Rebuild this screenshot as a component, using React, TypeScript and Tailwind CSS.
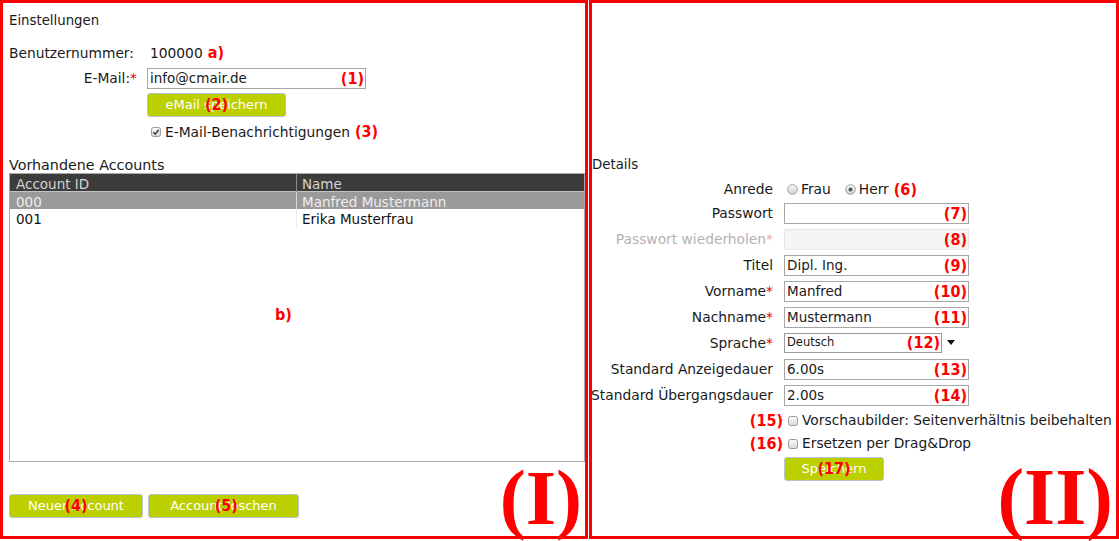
import React from "react";

const ann =
  "font-['DejaVu_Sans_Condensed','DejaVu_Sans',sans-serif] font-bold text-[16px] leading-none text-[#ff0000] whitespace-nowrap";

function Check({ checked }: { checked?: boolean }) {
  return (
    <svg width="10" height="10" viewBox="0 0 10 10" className="shrink-0">
      <defs>
        <linearGradient id="cbg" x1="0" y1="0" x2="0" y2="1">
          <stop offset="0" stopColor="#fdfdfd" />
          <stop offset="1" stopColor="#d6d6d6" />
        </linearGradient>
      </defs>
      <rect x="0.5" y="0.5" width="9" height="9" rx="2" fill="url(#cbg)" stroke="#9a9a9a" />
      {checked && <path d="M2.3 5.2 L4.2 7.1 L7.8 2.8" fill="none" stroke="#444" strokeWidth="1.6" />}
    </svg>
  );
}

function Radio({ checked }: { checked?: boolean }) {
  return (
    <svg width="11" height="11" viewBox="0 0 11 11" className="shrink-0">
      <defs>
        <linearGradient id="rbg" x1="0" y1="0" x2="0" y2="1">
          <stop offset="0" stopColor="#fbfbfb" />
          <stop offset="1" stopColor="#cfcfcf" />
        </linearGradient>
      </defs>
      <circle cx="5.5" cy="5.5" r="4.8" fill="url(#rbg)" stroke="#9c9c9c" />
      {checked && <circle cx="5.5" cy="5.5" r="2" fill="#555" />}
    </svg>
  );
}

function Field({ value, note, disabled }: { value?: string; note: string; disabled?: boolean }) {
  return (
    <div
      className={`relative flex h-[21px] w-[185px] items-center pl-[2px] text-[13.5px] ${
        disabled ? "border border-[#e6e6e6] bg-[#f5f5f3]" : "border border-[#a6a6a6] bg-white"
      }`}
    >
      {value}
      <span className={`absolute right-[1px] top-1/2 -translate-y-1/2 ${ann}`}>{note}</span>
    </div>
  );
}

function Label({ text, req, dim, h = "h-[21px]" }: { text: string; req?: boolean; dim?: boolean; h?: string }) {
  return (
    <div className={`flex ${h} items-center justify-end whitespace-nowrap ${dim ? "text-[#b3b3b3]" : ""}`}>
      {text}
      {req && <span className={dim ? "text-[#f5a3a3]" : "text-[#e60000]"}>*</span>}
    </div>
  );
}

function Button({ label, note, w, shift = 0 }: { label: string; note: string; w: string; shift?: number }) {
  return (
    <div
      className={`relative flex h-[24px] ${w} items-center justify-center rounded-[3px] border border-[#b7c3cf] bg-[#bccf00] text-[13px] text-white`}
    >
      {label}
      <span
        className={`absolute top-1/2 left-1/2 -translate-y-1/2 ${shift ? "-translate-x-[38%]" : "-translate-x-1/2"} ${ann}`}
      >
        {note}
      </span>
    </div>
  );
}

export default function App() {
  return (
    <div className="flex h-[541px] w-[1119px] gap-[1px] bg-white font-['DejaVu_Sans',sans-serif] text-[13.8px] text-[#1a1a1a]">
      {/* (I) Einstellungen */}
      <div className="relative flex h-[539px] w-[588px] flex-col border-[3px] border-[#ff0000] pl-[6px]">
        <div className="mt-[10px] h-[16px] text-[13.3px] leading-[16px]">Einstellungen</div>

        <div className="mt-[14px] flex h-[20px] items-center">
          <div className="w-[128px]">Benutzernummer:</div>
          <div className="ml-[13px] flex items-center gap-[5px]">
            100000 <span className={ann}>a)</span>
          </div>
        </div>

        <div className="mt-[5px] flex">
          <div className="w-[128px]">
            <Label text="E-Mail:" req />
          </div>
          <div className="ml-[10px] relative flex h-[21px] w-[219px] items-center border border-[#a6a6a6] pl-[2px] text-[13.5px]">
            info@cmair.de
            <span className={`absolute right-[1px] top-1/2 -translate-y-1/2 ${ann}`}>(1)</span>
          </div>
        </div>

        <div className="mt-[4px] ml-[138px]">
          <Button label="eMail speichern" note="(2)" w="w-[139px]" />
        </div>

        <div className="mt-[7px] ml-[142px] flex h-[16px] items-center gap-[4px]">
          <Check checked />
          <span>E-Mail-Benachrichtigungen</span>
          <span className={`ml-[1px] ${ann}`}>(3)</span>
        </div>

        <div className="mt-[17px] h-[16px] text-[14.3px] leading-[16px]">Vorhandene Accounts</div>

        <div className="relative h-[289px] w-[576px] border border-[#a9a9a9] text-[13.5px]">
          <div className="grid h-[18px] grid-cols-[287px_1fr] border-b border-[#c4c4c4] bg-[#3c3c3c] text-[#d4d4d4]">
            <div className="flex items-center border-r border-[#8a8a8a] pl-[6px]">Account ID</div>
            <div className="flex items-center pl-[5px]">Name</div>
          </div>
          <div className="grid h-[17px] grid-cols-[287px_1fr] bg-[#9a9a9a] text-[#eeeeee]">
            <div className="flex items-center border-r border-[#d8d8d8] pl-[6px]">000</div>
            <div className="flex items-center pl-[5px]">Manfred Mustermann</div>
          </div>
          <div className="grid h-[17px] grid-cols-[287px_1fr] text-[#111]">
            <div className="flex items-center border-r border-[#eeeeee] pl-[6px]">001</div>
            <div className="flex items-center pl-[5px]">Erika Musterfrau</div>
          </div>
          <span className={`absolute left-[265px] top-[133px] ${ann}`}>b)</span>
        </div>

        <div className="mt-[32px] flex gap-[5px]">
          <Button label="Neuer Account" note="(4)" w="w-[134px]" />
          <Button label="Account löschen" note="(5)" w="w-[151px]" shift={1} />
        </div>

        <span className="absolute right-[3px] bottom-[-1px] font-['Liberation_Serif',serif] text-[78px] font-bold leading-none text-[#ff0000]">
          (I)
        </span>
      </div>

      {/* (II) Details */}
      <div className="relative flex h-[539px] w-[530px] flex-col border-[3px] border-[#ff0000]">
        <div className="mt-[154px] h-[16px] text-[13.3px] leading-[16px]">Details</div>

        <div className="mt-[8px] grid grid-cols-[181px_1fr] gap-x-[11px] gap-y-[5px]">
          <Label text="Anrede" h="h-[17px]" />
          <div className="flex h-[17px] items-center">
            <span className="ml-[3px]"><Radio /></span>
            <span className="ml-[3px]">Frau</span>
            <span className="ml-[14px]"><Radio checked /></span>
            <span className="ml-[3px]">Herr</span>
            <span className={`ml-[5px] ${ann}`}>(6)</span>
          </div>

          <Label text="Passwort" />
          <Field note="(7)" />

          <Label text="Passwort wiederholen" req dim />
          <Field note="(8)" disabled />

          <Label text="Titel" />
          <Field value="Dipl. Ing." note="(9)" />

          <Label text="Vorname" req />
          <Field value="Manfred" note="(10)" />

          <Label text="Nachname" req />
          <Field value="Mustermann" note="(11)" />

          <Label text="Sprache" req />
          <div className="flex h-[21px] items-start">
            <div className="relative flex h-[20px] w-[158px] items-center border border-[#9c9c9c] bg-white pl-[2px] text-[11.5px]">
              Deutsch
              <span className={`absolute right-[1px] top-1/2 -translate-y-1/2 ${ann}`}>(12)</span>
            </div>
            <svg width="8" height="6" viewBox="0 0 8 6" className="ml-[5px] mt-[7px]">
              <path d="M0 0 H8 L4 5 Z" fill="#111" />
            </svg>
          </div>

          <Label text="Standard Anzeigedauer" />
          <Field value="6.00s" note="(13)" />

          <Label text="Standard Übergangsdauer" />
          <Field value="2.00s" note="(14)" />
        </div>

        <div className="mt-[6px] ml-[192px] flex flex-col">
          <div className="relative flex h-[17px] items-center gap-[4px] pl-[4px]">
            <span className={`absolute right-full mr-[1px] ${ann}`}>(15)</span>
            <Check />
            <span className="whitespace-nowrap">Vorschaubilder: Seitenverhältnis beibehalten</span>
          </div>
          <div className="relative mt-[6px] flex h-[17px] items-center gap-[4px] pl-[4px]">
            <span className={`absolute right-full mr-[1px] ${ann}`}>(16)</span>
            <Check />
            <span>Ersetzen per Drag&amp;Drop</span>
          </div>
          <div className="mt-[5px]">
            <Button label="Speichern" note="(17)" w="w-[100px]" />
          </div>
        </div>

        <span className="absolute right-[3px] bottom-[-1px] font-['Liberation_Serif',serif] text-[80px] font-bold leading-none text-[#ff0000]">
          (II)
        </span>
      </div>
    </div>
  );
}
